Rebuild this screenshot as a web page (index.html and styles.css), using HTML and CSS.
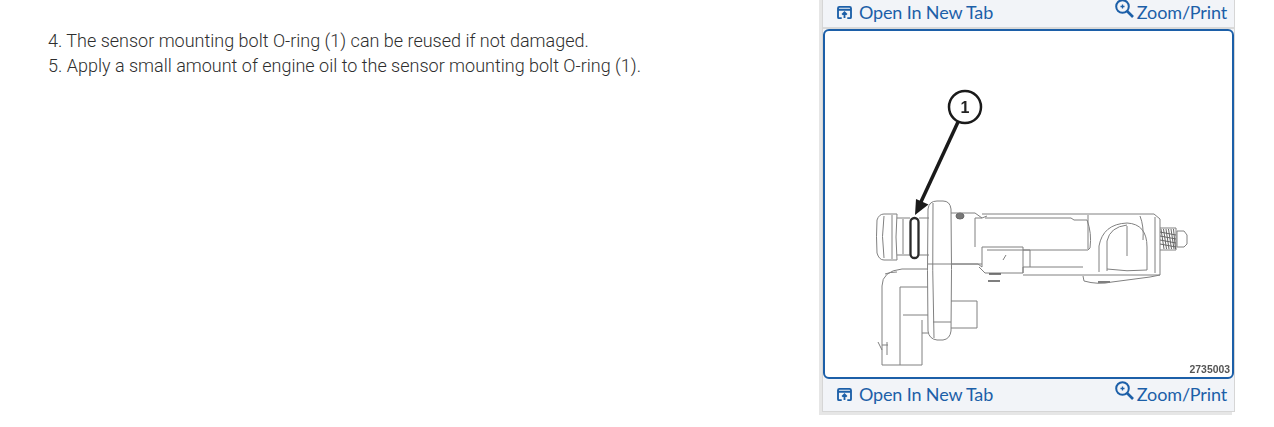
FILE: index.html
```html
<!DOCTYPE html>
<html lang="en">
<head>
<meta charset="utf-8">
<title>Sensor mounting bolt O-ring</title>
<link rel="stylesheet" href="styles.css">
</head>
<body>
<div class="page">
  <main class="steps">
    <p class="step">4. The sensor mounting bolt O-ring (1) can be reused if not damaged.</p>
    <p class="step">5. Apply a small amount of engine oil to the sensor mounting bolt O-ring (1).</p>
  </main>
  <aside class="figure">
    <div class="toolbar">
      <a class="tool"><svg class="icon-tab" viewBox="0 0 16 14"><path d="M1 4.500V12a1 1 0 0 0 1 1h3M11 13h3a1 1 0 0 0 1-1V4.500M1 2.500a1.500 1.500 0 0 1 1.500-1.500h11a1.500 1.500 0 0 1 1.500 1.500V4H1zM8 13V7M5.500 9.200L8 6.700l2.500 2.500"/></svg>Open In New Tab</a>
      <a class="tool tool-zoom"><svg class="icon-zoom" viewBox="0 0 19 19"><circle cx="7.500" cy="7.500" r="6.300"/><path class="handle" d="M12 12l6 6"/><path class="plus" d="M5.500 7.500h4M7.500 5.500v4"/></svg>Zoom/Print</a>
    </div>
    <div class="plate">
      <svg class="drawing" viewBox="823 29 411 350">
        <g class="lines">
          <!-- cap and neck -->
          <path d="M897 214h-13q-5 0-7 6q-1 17 0 33q2 7 7 7h13q-2-23 0-46z"/>
          <path d="M884 216q-3 20 0 42M892 215v44"/>
          <path d="M897 218h13M897 255h13M919 218h10M919 255h10M903 219v35"/>
          <!-- flange -->
          <path d="M937 201h6q7 0 8 8q1 60 0 122q-1 8-8 9h-6q-8-1-9-9q-1-60 0-122q1-8 9-8z"/>
          <path d="M933 203q-1 68 1 135M928 264h54M933 322h18"/>
          <!-- bolt boss on the flange -->
          <ellipse class="boss" cx="960" cy="216" rx="4" ry="3"/>
          <!-- body -->
          <path d="M951 213h24l7 5M982 218h-7v29M987 216l-5 2M1030 214h124l6 5v56h-60M982 214h48"/>
          <path d="M985 218h86l3 2h13q5 13 3 28l-2 2h-101M1088 215v34"/>
          <path d="M951 264h27l4 3M982 247h41v26h-38l-6-6"/>
          <path d="M982 247v20M1006 255l-3 5M1023 250h7M1023 273v-6h60M1030 250v17"/>
          <path d="M1023 275h77"/>
          <path class="dark" d="M989 274h12M988 281h12M1098 282h12"/>
          <!-- arch -->
          <path d="M1099 246q4-22 28-23q20 1 20 24v23M1099 246v26M1107 271v-30q3-14 20-16"/>
          <path d="M1107 269q20 3 40 1M1127 226v30M1140 216q4 10 3 24M1155 217v56"/>
          <path d="M1083 276l1 5q14 4 28 1l38-5 10-2"/>
          <!-- screw -->
          <path d="M1177 231h7l3 4v9l-3 3h-7z"/>
          <path d="M1160 228h16v22h-16"/>
          <path class="thread" d="M1161 229l3 20M1163.500 229l3 20M1166 229l3 20M1168.500 229l3 20M1171 229l3 20M1173.500 229l2 20M1160 232l16 3M1160 236l16 3M1160 240l16 3M1160 244l16 3"/>
          <!-- lower block -->
          <path d="M951 301h26v27h-26"/>
          <!-- elbow -->
          <path d="M928 269h-26q-20 2-20 17v79h40v-32h6M900 365V287h28"/>
          <path d="M885 274q5-2 12-2M903 315h25M922 320v13M878 342l4 8M887 342v13M882 345h6"/>
        </g>
        <g class="ink">
          <circle class="callout" cx="965" cy="107" r="16"/>
          <text class="callout-num" x="965" y="113">1</text>
          <path class="leader" d="M958 122L920 204"/>
          <path class="head" d="M915 215l1-16 12.500 5.500z"/>
          <rect class="ring" x="910.500" y="218" width="8" height="40" rx="4"/>
          <text class="partno" x="1230" y="373">2735003</text>
        </g>
      </svg>
    </div>
    <div class="toolbar">
      <a class="tool"><svg class="icon-tab" viewBox="0 0 16 14"><path d="M1 4.500V12a1 1 0 0 0 1 1h3M11 13h3a1 1 0 0 0 1-1V4.500M1 2.500a1.500 1.500 0 0 1 1.500-1.500h11a1.500 1.500 0 0 1 1.500 1.500V4H1zM8 13V7M5.500 9.200L8 6.700l2.500 2.500"/></svg>Open In New Tab</a>
      <a class="tool tool-zoom"><svg class="icon-zoom" viewBox="0 0 19 19"><circle cx="7.500" cy="7.500" r="6.300"/><path class="handle" d="M12 12l6 6"/><path class="plus" d="M5.500 7.500h4M7.500 5.500v4"/></svg>Zoom/Print</a>
    </div>
  </aside>
</div>
</body>
</html>
```
FILE: styles.css
```css
html, body {
  margin: 0;
  padding: 0;
  background: #fff;
}
body {
  height: 427px;
  overflow: hidden;
}
.page {
  display: flex;
  align-items: flex-start;
}
.steps {
  flex: 0 0 822px;
  box-sizing: border-box;
  padding: 28px 0 0 48px;
}
.step {
  margin: 0;
  font: 300 18px/25px Roboto, sans-serif;
  color: #2e2e2e;
}
.figure {
  flex: 0 0 411px;
  margin-top: -5px;
  border: 1px solid #d6d6d6;
  background: #f2f4f8;
  box-shadow: -3px 3px 0 #e6e6e6;
}
.toolbar {
  display: flex;
  justify-content: space-between;
  height: 30px;
  padding: 0 7px 2px 14px;
  align-items: center;
}
.toolbar:first-child {
  height: 30px;
  padding-top: 1px;
  padding-bottom: 0;
  border-bottom: 2px solid #d9d9d9;
}
.tool {
  display: flex;
  align-items: center;
  gap: 7px;
  font: 400 18px/24px Lato, sans-serif;
  letter-spacing: -0.15px;
  color: #1c5fa8;
}
.tool-zoom {
  gap: 3px;
}
.icon-tab {
  width: 15px;
  height: 13px;
  fill: none;
  stroke: #1c5fa8;
  stroke-width: 2;
}
.icon-zoom {
  width: 19px;
  height: 19px;
  margin-top: -7px;
  fill: none;
  stroke: #1c5fa8;
  stroke-width: 2;
}
.icon-zoom .handle {
  stroke-width: 2.600;
}
.icon-zoom .plus {
  stroke-width: 1.300;
}
.plate {
  height: 350px;
  box-sizing: border-box;
  border: 2px solid #1c5fa8;
  border-radius: 6px;
  background: #fff;
  overflow: hidden;
}
.drawing {
  display: block;
  width: 411px;
  height: 350px;
  margin: -2px;
}
.lines {
  fill: none;
  stroke: #808080;
  stroke-width: 1;
  filter: blur(0.35px);
}
.lines .boss {
  fill: #777;
  stroke: #666;
}
.lines .thread {
  stroke: #666;
}
.lines .dark {
  stroke: #555;
  stroke-width: 1.500;
}
.ink {
  filter: blur(0.4px);
}
.callout {
  fill: #fff;
  stroke: #1a1a1a;
  stroke-width: 2.500;
}
.callout-num {
  font: 700 16px "Liberation Sans", sans-serif;
  text-anchor: middle;
  fill: #222;
}
.leader {
  stroke: #1a1a1a;
  stroke-width: 3.500;
  fill: none;
}
.head {
  fill: #1a1a1a;
}
.ring {
  fill: #fff;
  stroke: #2a2a2a;
  stroke-width: 2.300;
}
.partno {
  font: 700 10.400px "Liberation Sans", sans-serif;
  text-anchor: end;
  fill: #555;
}
```
